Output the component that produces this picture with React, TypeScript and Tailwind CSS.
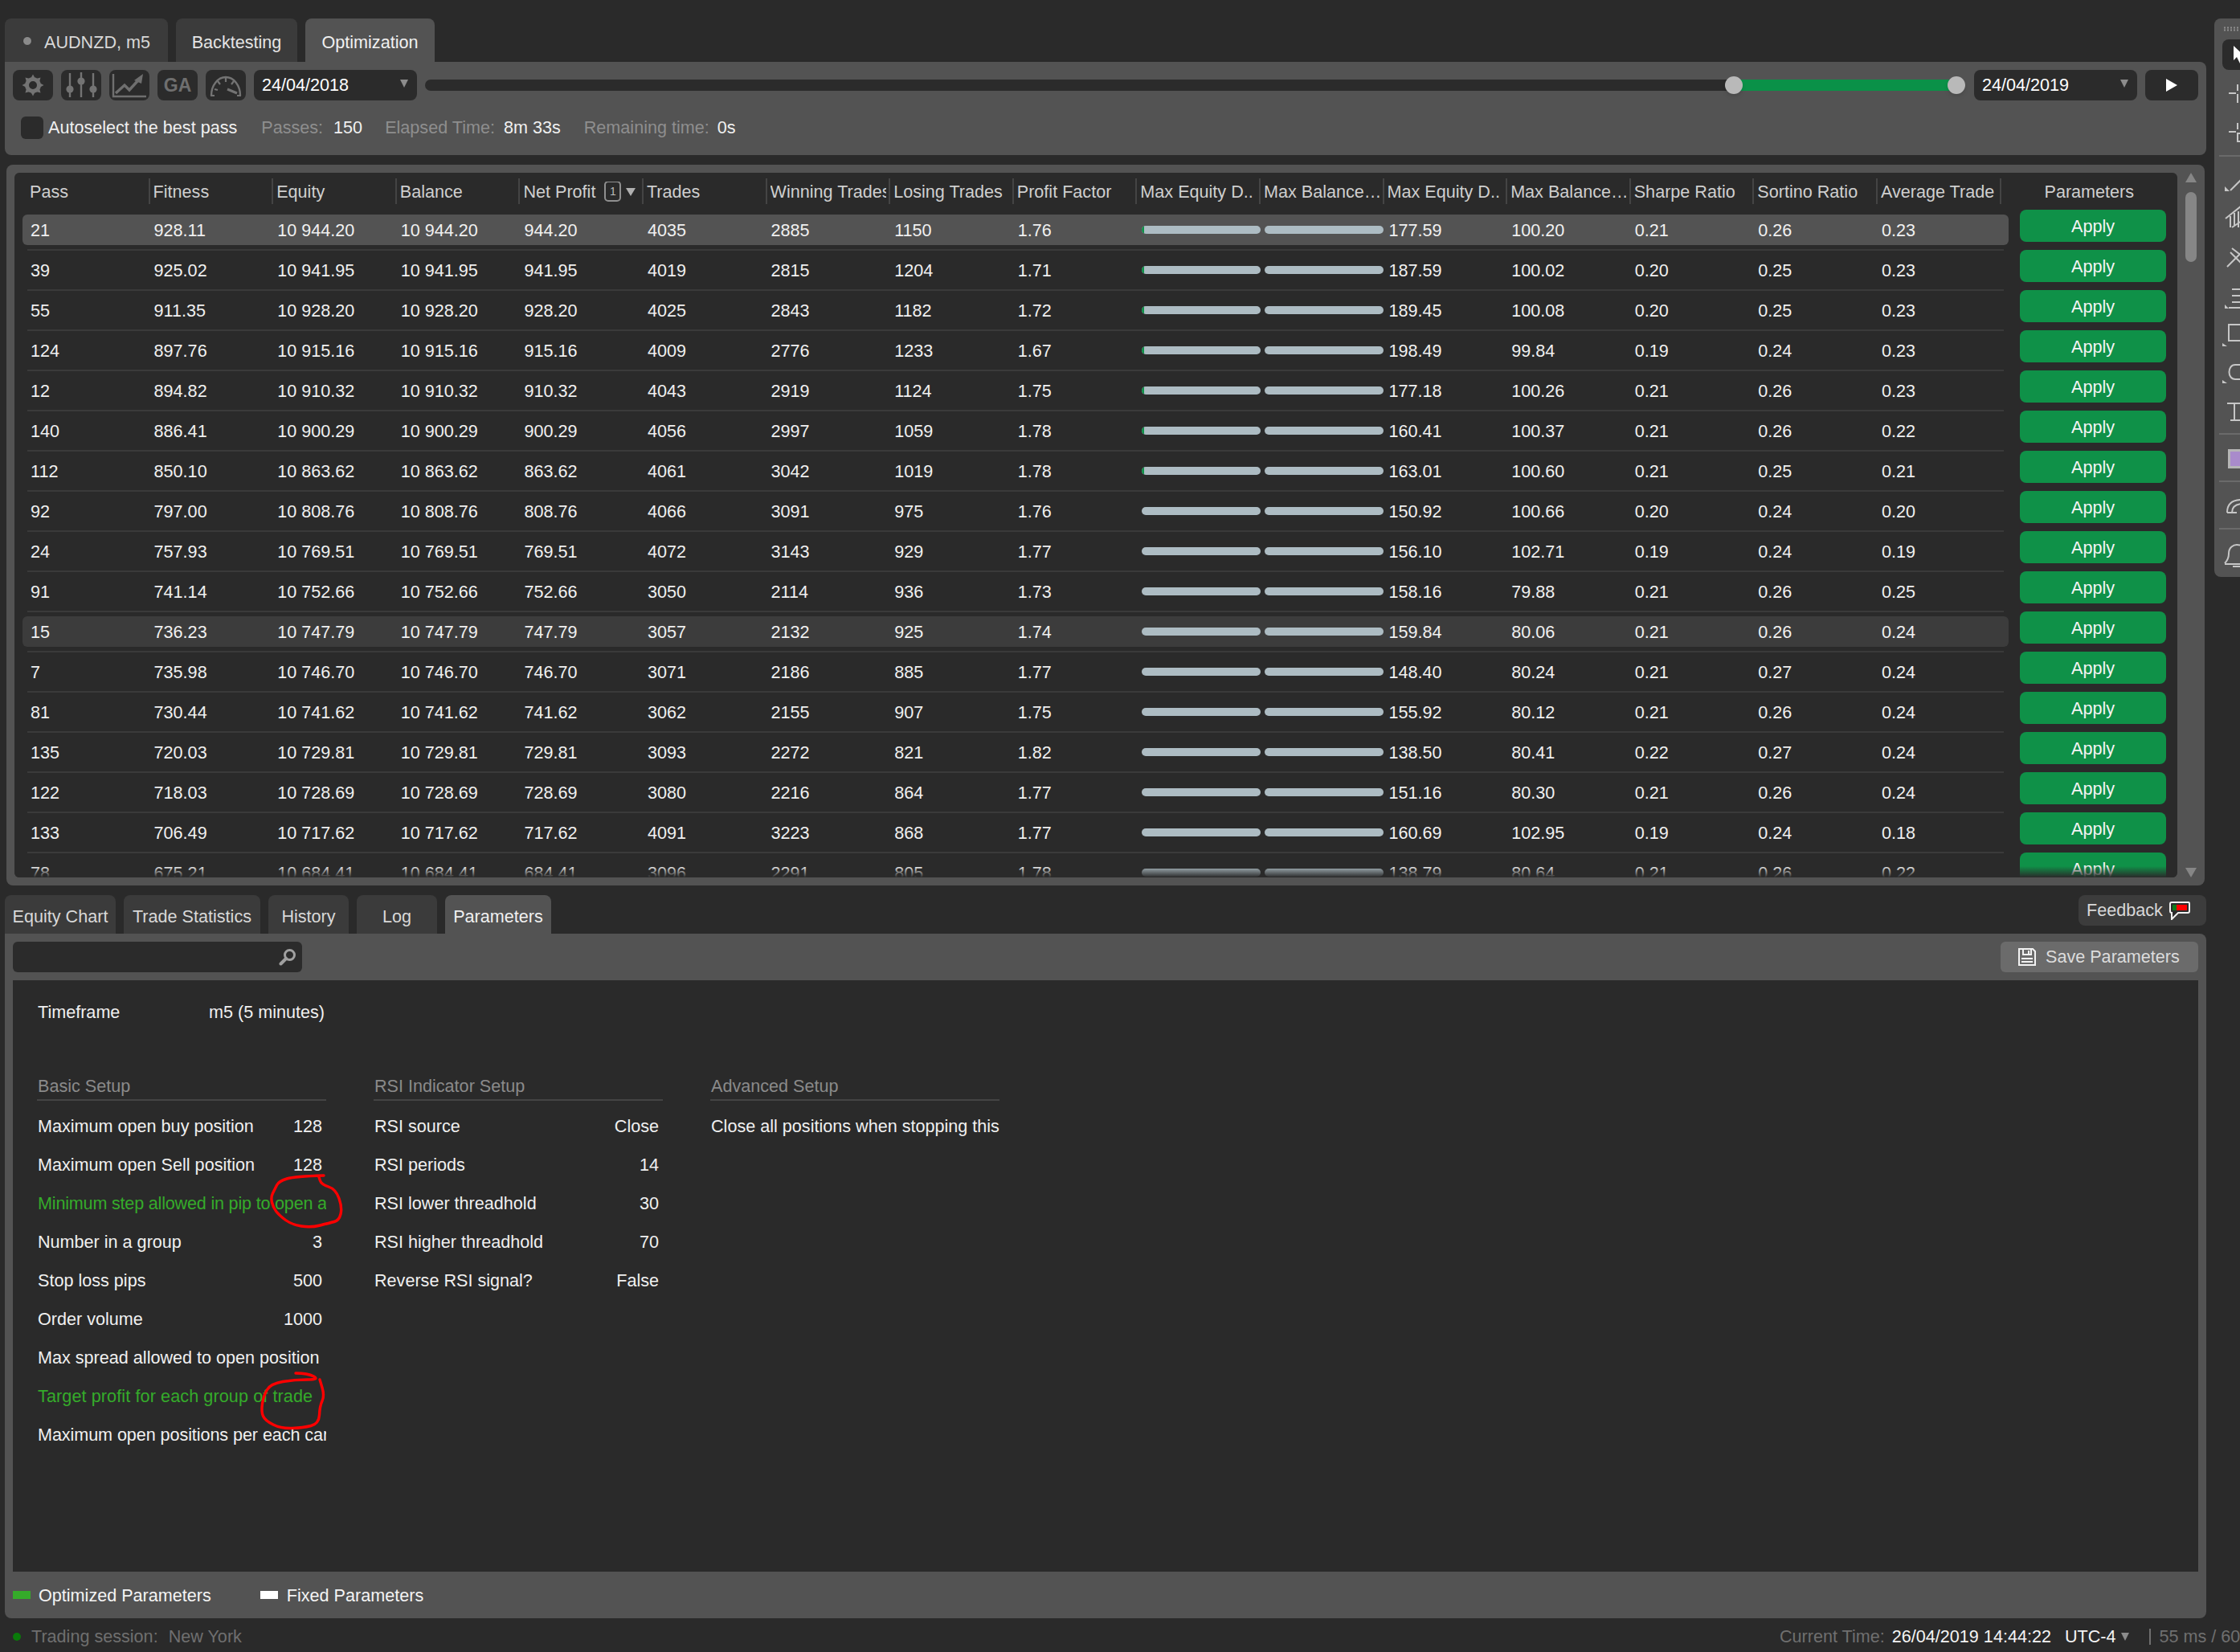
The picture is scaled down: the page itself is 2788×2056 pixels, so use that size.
import React from "react";

const ROWS = [
    ["21", "928.11", "10 944.20", "944.20", "4035", "2885", "1150", "1.76", "177.59", "100.20", "0.21", "0.26", "0.23"],
    ["39", "925.02", "10 941.95", "941.95", "4019", "2815", "1204", "1.71", "187.59", "100.02", "0.20", "0.25", "0.23"],
    ["55", "911.35", "10 928.20", "928.20", "4025", "2843", "1182", "1.72", "189.45", "100.08", "0.20", "0.25", "0.23"],
    ["124", "897.76", "10 915.16", "915.16", "4009", "2776", "1233", "1.67", "198.49", "99.84", "0.19", "0.24", "0.23"],
    ["12", "894.82", "10 910.32", "910.32", "4043", "2919", "1124", "1.75", "177.18", "100.26", "0.21", "0.26", "0.23"],
    ["140", "886.41", "10 900.29", "900.29", "4056", "2997", "1059", "1.78", "160.41", "100.37", "0.21", "0.26", "0.22"],
    ["112", "850.10", "10 863.62", "863.62", "4061", "3042", "1019", "1.78", "163.01", "100.60", "0.21", "0.25", "0.21"],
    ["92", "797.00", "10 808.76", "808.76", "4066", "3091", "975", "1.76", "150.92", "100.66", "0.20", "0.24", "0.20"],
    ["24", "757.93", "10 769.51", "769.51", "4072", "3143", "929", "1.77", "156.10", "102.71", "0.19", "0.24", "0.19"],
    ["91", "741.14", "10 752.66", "752.66", "3050", "2114", "936", "1.73", "158.16", "79.88", "0.21", "0.26", "0.25"],
    ["15", "736.23", "10 747.79", "747.79", "3057", "2132", "925", "1.74", "159.84", "80.06", "0.21", "0.26", "0.24"],
    ["7", "735.98", "10 746.70", "746.70", "3071", "2186", "885", "1.77", "148.40", "80.24", "0.21", "0.27", "0.24"],
    ["81", "730.44", "10 741.62", "741.62", "3062", "2155", "907", "1.75", "155.92", "80.12", "0.21", "0.26", "0.24"],
    ["135", "720.03", "10 729.81", "729.81", "3093", "2272", "821", "1.82", "138.50", "80.41", "0.22", "0.27", "0.24"],
    ["122", "718.03", "10 728.69", "728.69", "3080", "2216", "864", "1.77", "151.16", "80.30", "0.21", "0.26", "0.24"],
    ["133", "706.49", "10 717.62", "717.62", "4091", "3223", "868", "1.77", "160.69", "102.95", "0.19", "0.24", "0.18"],
    ["78", "675.21", "10 684.41", "684.41", "3096", "2291", "805", "1.78", "138.79", "80.64", "0.21", "0.26", "0.22"],
];

const HEADERS = [
    "Pass", "Fitness", "Equity", "Balance", "Net Profit", "Trades", "Winning Trades", "Losing Trades", "Profit Factor",
    "Max Equity D..", "Max Balance\u2026", "Max Equity D..", "Max Balance\u2026", "Sharpe Ratio", "Sortino Ratio", "Average Trade",
];

const BASIC = [
    ["Maximum open buy position", "128"],
    ["Maximum open Sell position", "128"],
    ["Minimum step allowed in pip to open a", "", "text-[#35ab2a] tracking-[-0.2px]"],
    ["Number in a group", "3"],
    ["Stop loss pips", "500"],
    ["Order volume", "1000"],
    ["Max spread allowed to open position", ""],
    ["Target profit for each group of trade", "", "text-[#35ab2a] tracking-[0.1px]"],
    ["Maximum open positions per each candle", "", "text-[#f0f0f0] tracking-[-0.08px]"],
];

const RSI = [
    ["RSI source", "Close"],
    ["RSI periods", "14"],
    ["RSI lower threadhold", "30"],
    ["RSI higher threadhold", "70"],
    ["Reverse RSI signal?", "False"],
];

const ADVANCED = [["Close all positions when stopping this cBot", ""]];

// hand drawn red marks, page coordinates
const MARK_ONE = [[403, 1463], [367, 1464], [347, 1470], [342, 1480], [337, 1490], [340, 1503], [348, 1513], [363, 1524], [387, 1528], [410, 1522], [422, 1519], [426, 1503], [418, 1480], [400, 1474], [397, 1465]];
const MARK_TWO = [[368, 1709], [383, 1709], [398, 1717], [367, 1717], [337, 1722], [328, 1737], [325, 1757], [330, 1768], [350, 1778], [377, 1777], [397, 1772], [398, 1750], [404, 1737], [398, 1717]];

function smooth(points: number[][]) {
    let d = `M${points[0][0]} ${points[0][1]}`;
    for (let i = 1; i < points.length - 1; i++) {
        const mx = (points[i][0] + points[i + 1][0]) / 2;
        const my = (points[i][1] + points[i + 1][1]) / 2;
        d += ` Q${points[i][0]} ${points[i][1]} ${mx} ${my}`;
    }
    const last = points[points.length - 1];
    return d + ` L${last[0]} ${last[1]}`;
}

function TriangleDown({ className }: { className: string }) {
    return (
        <svg viewBox="0 0 10 10" className={className} preserveAspectRatio="none">
            <path d="M0 0H10L5 10Z" fill="currentColor" />
        </svg>
    );
}

function GearIcon() {
    return (
        <svg viewBox="0 0 30 30" className="w-[30px] h-[30px] text-[#737373]">
            <circle cx="15" cy="15" r="7.5" fill="none" stroke="currentColor" strokeWidth="5" />
            {[0, 45, 90, 135, 180, 225, 270, 315].map(a => (
                <path key={a} d="M12.5 6L15 1.5L17.5 6Z" fill="currentColor" transform={`rotate(${a} 15 15)`} />
            ))}
        </svg>
    );
}

function SlidersIcon() {
    return (
        <svg viewBox="0 0 44 34" className="w-[44px] h-[34px] text-[#737373]">
            <path d="M8 2V32M22 1V32M37 2V32" stroke="currentColor" strokeWidth="2.4" fill="none" />
            <circle cx="8" cy="22" r="4.6" fill="currentColor" />
            <circle cx="22" cy="12" r="4.6" fill="currentColor" />
            <circle cx="37" cy="22" r="4.6" fill="currentColor" />
        </svg>
    );
}

function ChartIcon() {
    return (
        <svg viewBox="0 0 44 34" className="w-[44px] h-[34px] text-[#6f6f6f]">
            <path d="M2 3V31H43" stroke="currentColor" strokeWidth="2.4" fill="none" />
            <path d="M5 27L16 17L22 23L33 11" stroke="currentColor" strokeWidth="3.4" fill="none" />
            <path d="M28 11L39 3L37 15Z" fill="currentColor" />
        </svg>
    );
}

function GaugeIcon() {
    return (
        <svg viewBox="0 0 42 32" className="w-[42px] h-[32px] text-[#737373]">
            <path d="M3 29A18 23 0 1 1 39 29" stroke="currentColor" strokeWidth="2.4" fill="none" />
            <path d="M21 7V12M11 11L14 15M31 11L28 15M7 21L11 22M2 29H7M35 29H40" stroke="currentColor" strokeWidth="2.2" fill="none" />
            <path d="M23 21L35 26" stroke="currentColor" strokeWidth="3" fill="none" />
        </svg>
    );
}

function DateSelect({ value, className }: { value: string; className: string }) {
    return (
        <div className={`flex items-center justify-between h-[38px] rounded-lg bg-[#2b2b2b] pl-[10px] text-white ${className}`}>
            <span>{value}</span>
            <TriangleDown className="w-[10px] h-[10px] text-[#8c8c8c] mr-[11px] mb-[4px]" />
        </div>
    );
}

function BarCell({ first, green }: { first: boolean; green: boolean }) {
    return (
        <div className={`w-[153.6px] flex-none ${first ? "pl-[8px]" : "pl-[7px]"}`}>
            <div className="w-[148px] h-[10px] rounded-full bg-[#adbcc3] overflow-hidden">
                {green && <div className="w-[3px] h-[10px] bg-[#0f9148]" />}
            </div>
        </div>
    );
}

function ResultRow({ row, index }: { row: string[]; index: number }) {
    const bg = index === 0 ? "bg-[#535353]" : row[0] === "15" ? "bg-[#3c3c3c]" : "";
    const cells = [row[0], row[1], row[2], row[2], row[3], row[4], row[5], row[6], row[7]];
    const after = [row[8], row[9], row[10], row[11], row[12]];

    return (
        <div className="flex items-start h-[50px] flex-none">
            <div className="w-[2472px] ml-[10px] flex-none">
                <div className={`flex items-center h-[38px] pl-[3px] rounded-md ${bg}`}>
                    {cells.map((c, i) => (
                        <div key={i} className="w-[153.6px] flex-none pl-[7px] pt-[2px] text-[#f0f0f0]">{c}</div>
                    ))}
                    <BarCell first green={index < 7} />
                    <BarCell first={false} green={false} />
                    {after.map((c, i) => (
                        <div key={i} className={`w-[153.6px] flex-none pt-[2px] text-[#f0f0f0] ${i === 0 ? "pl-[8px]" : "pl-[7px]"}`}>{c}</div>
                    ))}
                </div>
                <div className="h-[2px] mt-[5px] ml-[6px] w-[2460px] bg-[#3a3a3a]" />
            </div>
            <button className="ml-[14px] -mt-[6px] pt-[1px] w-[182px] h-[40px] flex-none rounded-lg bg-[#0f9148] text-[#f4f4f4] flex items-center justify-center">
                Apply
            </button>
        </div>
    );
}

function ResultsTable() {
    return (
        <div className="flex h-[897px] ml-[2px] w-[2736px] p-[10px] pr-0 rounded-lg bg-[#535353] flex-none">
            <div className="relative w-[2692px] h-[877px] rounded-md bg-[#2a2a2a] overflow-hidden flex-none flex flex-col">
                <div className="flex items-start h-[52px] pt-[7px] pl-[13px] flex-none text-[#cfcfcf]">
                    {HEADERS.map((h, i) => (
                        <div key={i} className={`w-[153.6px] h-[32px] flex-none border-l-2 pl-[4px] pt-[2px] flex items-center ${i === 0 ? "border-transparent" : "border-[#444444]"}`}>
                            <div className="w-[144px] overflow-hidden whitespace-nowrap flex items-center">
                                <span>{h}</span>
                                {h === "Net Profit" && (
                                    <>
                                        <span className="ml-[11px] -mt-[2px] w-[21px] h-[26px] rounded-[5px] border-2 border-[#8f8f8f] flex items-center justify-center text-[14px] text-[#bdbdbd]">1</span>
                                        <TriangleDown className="ml-[6px] w-[12px] h-[10px] text-[#b0b0b0]" />
                                    </>
                                )}
                            </div>
                        </div>
                    ))}
                    <div className="w-[2px] h-[32px] flex-none bg-[#444444]" />
                    <div className="ml-[54px] h-[32px] pt-[2px] flex items-center">Parameters</div>
                </div>
                <div className="flex flex-col">
                    {ROWS.map((r, i) => (
                        <ResultRow key={i} row={r} index={i} />
                    ))}
                </div>
                {/* bottom fade over the cut row */}
                <div className="absolute left-0 right-0 bottom-0 h-[14px] bg-gradient-to-b from-transparent to-[#2a2a2a]" />
            </div>
            <div className="w-[34px] h-[877px] flex-none flex flex-col items-center">
                <svg viewBox="0 0 14 12" className="w-[14px] h-[12px] text-[#868686]"><path d="M7 0L14 12H0Z" fill="currentColor" /></svg>
                <div className="w-[14px] h-[87px] mt-[12px] rounded-full bg-[#868686]" />
                <TriangleDown className="mt-auto w-[14px] h-[12px] text-[#868686]" />
            </div>
        </div>
    );
}

function ParamSection({ title, rows, width }: { title: string; rows: string[][]; width: string }) {
    return (
        <div className={`flex-none ${width}`}>
            <div className="h-[33px] leading-[28px] pt-[1px] pl-[1px] border-b-2 border-[#444444] text-[#8a8a8a]">{title}</div>
            <div className="mt-[8px] flex flex-col">
                {rows.map((r, i) => (
                    <div key={i} className="h-[48px] flex items-center overflow-hidden whitespace-nowrap pl-[1px] pr-[5px]">
                        <span className={r[2] || "text-[#f0f0f0]"}>{r[0]}</span>
                        {r[1] && <span className="ml-auto text-[#f0f0f0]">{r[1]}</span>}
                    </div>
                ))}
            </div>
        </div>
    );
}

function ParametersPanel() {
    return (
        <div className="flex flex-col h-[852px] rounded-b-lg rounded-tr-lg bg-[#535353] px-[10px] pt-[10px] flex-none">
            <div className="flex items-center justify-between h-[38px] flex-none">
                <div className="w-[360px] h-[38px] rounded-md bg-[#2b2b2b] flex items-center justify-end pr-[7px]">
                    <svg viewBox="0 0 22 22" className="w-[22px] h-[22px] text-[#a0a0a0]">
                        <circle cx="13.5" cy="8.5" r="6" fill="none" stroke="currentColor" strokeWidth="3" />
                        <path d="M9 13L2.5 19.5" stroke="currentColor" strokeWidth="4" strokeLinecap="round" />
                    </svg>
                </div>
                <button className="w-[246px] h-[38px] rounded-md bg-[#6b6b6b] text-[#dcdcdc] flex items-center pl-[22px]">
                    <svg viewBox="0 0 22 22" className="w-[22px] h-[22px]">
                        <path d="M1 1H18L21 4V21H1Z" fill="none" stroke="#f2f2f2" strokeWidth="2" />
                        <path d="M6 2V8H16V2M13 3V7M4 13H18M4 17H18" fill="none" stroke="#f2f2f2" strokeWidth="2" />
                    </svg>
                    <span className="ml-[12px]">Save Parameters</span>
                </button>
            </div>
            <div className="mt-[10px] h-[736px] bg-[#2a2a2a] pl-[30px] pt-[25px] flex-none">
                <div className="flex h-[28px] leading-[28px] pt-[1px] text-[#f0f0f0] pl-[1px]">
                    <span className="w-[213px]">Timeframe</span>
                    <span>m5 (5 minutes)</span>
                </div>
                <div className="flex gap-[59px] mt-[64px]">
                    <ParamSection title="Basic Setup" rows={BASIC} width="w-[360px]" />
                    <ParamSection title="RSI Indicator Setup" rows={RSI} width="w-[360px]" />
                    <ParamSection title="Advanced Setup" rows={ADVANCED} width="w-[360px]" />
                </div>
            </div>
            <div className="flex items-center h-[58px] flex-none text-[#f4f4f4]">
                <div className="w-[22px] h-[10px] bg-[#35ab2a]" />
                <span className="ml-[10px] pt-[1px]">Optimized Parameters</span>
                <div className="ml-[61px] w-[22px] h-[10px] bg-white" />
                <span className="ml-[11px] pt-[1px]">Fixed Parameters</span>
            </div>
        </div>
    );
}

function ToolIcon({ d, height = "h-[46px]", fill }: { d: string; height?: string; fill?: string }) {
    return (
        <svg viewBox="0 0 60 46" className={`w-[60px] flex-none text-[#c6c6c6] ${height}`}>
            <path d={d} fill="none" stroke="currentColor" strokeWidth="2" />
            {fill && <path d={fill} fill="currentColor" />}
        </svg>
    );
}

function DrawingToolbar() {
    const sep = "h-[2px] w-[70px] -ml-[4px] bg-[#6a6a6a] flex-none";
    return (
        <div className="ml-[10px] w-[80px] h-[695px] flex-none rounded-l-lg bg-[#535353] pl-[10px] pt-[10px] flex flex-col">
            <svg viewBox="0 0 26 6" className="w-[26px] h-[6px] ml-[2px] flex-none text-[#8f8f8f]">
                <path d="M0 1.5H26M0 4.5H26" stroke="currentColor" strokeWidth="2" strokeDasharray="2 2" />
            </svg>
            <div className="mt-[10px] w-[60px] h-[38px] rounded-lg bg-[#2b2b2b] flex-none">
                <svg viewBox="0 0 20 24" className="ml-[13px] mt-[8px] w-[20px] h-[24px] text-white">
                    <path d="M1 0V18L5 14L9 22L12 21L9 13H15Z" fill="currentColor" />
                </svg>
            </div>
            {/* crosshairs */}
            <ToolIcon height="h-[48px] mt-[4px]" d="M8 24H17M19 13V21M19 25V36" />
            <ToolIcon height="h-[48px]" d="M8 24H17M19 13V21M19 26H26V36H19Z" />
            <div className={`${sep} mt-[6px]`} />
            {/* line, fibonacci, pitchfork, grid, rect, ellipse, text */}
            <div className="mt-[12px] flex flex-col flex-none">
                <ToolIcon d="M10 30L30 10" fill="M3 25L9 31H3Z" />
                <ToolIcon d="M4 19L24 3M10 16V30M15 12V28M20 10V30M24 12V24M12 30L24 22" />
                <ToolIcon d="M6 33L30 9M10 15L26 31M12 10L30 24" />
                <ToolIcon d="M12 15H40M12 23H40M12 31H40M8 38H40" fill="M3 34L8 39H3Z" />
                <ToolIcon d="M8 13H34V33H8Z" fill="M0 36L6 40H0Z" />
                <ToolIcon d="M16 17H34M16 35H34M16 17C6 17 6 35 16 35" fill="M0 36L6 40H0Z" />
                <ToolIcon d="M6 19H24M15 19V40M10 40H22" />
            </div>
            <div className={`${sep} mt-[10px]`} />
            <div className="mt-[18px] ml-[7px] w-[50px] h-[24px] flex-none border-[3px] border-[#b5b5b5] bg-[#a98bcb]" />
            <div className={`${sep} mt-[15px]`} />
            <ToolIcon height="h-[46px] mt-[10px]" d="M6 28C6 16 14 12 24 12H40M12 28C12 20 18 17 26 17H40M6 28H18" />
            <div className={`${sep} mt-[1px]`} />
            <ToolIcon height="h-[46px] mt-[10px]" d="M3 32C7 28 8 24 8 20C8 12 14 9 18 9C24 9 30 12 30 20M3 33H30M13 36H22" />
        </div>
    );
}

export default function App() {
    const tab = "flex items-center justify-center h-[54px] pt-[6px] rounded-t-lg flex-none";
    const lowerTab = "flex items-center justify-center h-[48px] pt-[5px] rounded-t-lg flex-none";

    return (
        <div className="relative w-[2788px] h-[2056px] overflow-hidden bg-[#2a2a2a] text-[21.6px] leading-[26px] font-['Liberation_Sans',Arial,sans-serif] flex flex-col">
            <div className="flex h-[2014px] flex-none pt-[23px]">
                <div className="w-[2740px] ml-[6px] flex-none flex flex-col">
                    {/* top tabs */}
                    <div className="flex gap-[10px] flex-none">
                        <div className={`${tab} w-[203px] bg-[#3b3b3b] text-[#d8d8d8]`}>
                            <div className="w-[12px] h-[12px] -mt-[4px] rounded-full bg-[#8a8a8a] border border-[#333333]" />
                            <span className="ml-[15px]">AUDNZD, m5</span>
                        </div>
                        <div className={`${tab} w-[151px] bg-[#3b3b3b] text-[#e4e4e4]`}>Backtesting</div>
                        <div className={`${tab} w-[161px] bg-[#535353] text-[#f0f0f0]`}>Optimization</div>
                    </div>

                    {/* run bar */}
                    <div className="h-[116px] rounded-b-lg rounded-tr-lg bg-[#535353] px-[10px] pt-[10px] flex-none">
                        <div className="flex items-center">
                            <div className="flex gap-[10px] flex-none">
                                <div className="w-[50px] h-[38px] rounded-lg bg-[#2b2b2b] flex items-center justify-center"><GearIcon /></div>
                                <div className="w-[50px] h-[38px] rounded-lg bg-[#2b2b2b] flex items-center justify-center"><SlidersIcon /></div>
                                <div className="w-[50px] h-[38px] rounded-lg bg-[#2b2b2b] flex items-center justify-center"><ChartIcon /></div>
                                <div className="w-[50px] h-[38px] rounded-lg bg-[#2b2b2b] flex items-center justify-center text-[#6f6f6f] font-bold text-[23px]">GA</div>
                                <div className="w-[50px] h-[38px] rounded-lg bg-[#2b2b2b] flex items-center justify-center"><GaugeIcon /></div>
                            </div>
                            <DateSelect value="24/04/2018" className="ml-[10px] w-[203px] flex-none" />
                            {/* date range slider */}
                            <div className="relative ml-[10px] w-[1917px] h-[14px] flex-none rounded-full bg-[#2b2b2b] flex">
                                <div className="w-[1629px] flex-none" />
                                <div className="w-[277px] h-[14px] flex-none bg-[#0a9148]" />
                                <div className="absolute left-[1618px] -top-[4px] w-[22px] h-[22px] rounded-full bg-[#b9b9b9] shadow-md" />
                                <div className="absolute left-[1895px] -top-[4px] w-[22px] h-[22px] rounded-full bg-[#b9b9b9] shadow-md" />
                            </div>
                            <DateSelect value="24/04/2019" className="ml-[11px] w-[203px] flex-none" />
                            <div className="ml-[10px] w-[66px] h-[38px] flex-none rounded-lg bg-[#2b2b2b] flex items-center justify-center">
                                <svg viewBox="0 0 14 16" className="w-[14px] h-[16px] text-white"><path d="M0 0L14 8L0 16Z" fill="currentColor" /></svg>
                            </div>
                        </div>
                        <div className="flex items-center mt-[20px] pl-[10px] whitespace-nowrap">
                            <div className="w-[28px] h-[28px] flex-none rounded-md bg-[#2b2b2b]" />
                            <span className="ml-[6px] text-[#f0f0f0]">Autoselect the best pass</span>
                            <span className="ml-[30px] text-[#8e8e8e]">Passes:</span>
                            <span className="ml-[13px] text-[#f0f0f0]">150</span>
                            <span className="ml-[28px] text-[#8e8e8e]">Elapsed Time:</span>
                            <span className="ml-[11px] text-[#f0f0f0]">8m 33s</span>
                            <span className="ml-[29px] text-[#8e8e8e]">Remaining time:</span>
                            <span className="ml-[10px] text-[#f0f0f0]">0s</span>
                        </div>
                    </div>

                    <div className="h-[12px] flex-none" />
                    <ResultsTable />
                    <div className="h-[12px] flex-none" />

                    {/* lower tabs */}
                    <div className="flex flex-none items-start">
                        <div className="flex gap-[10px]">
                            <div className={`${lowerTab} w-[138px] bg-[#3b3b3b] text-[#d8d8d8]`}>Equity Chart</div>
                            <div className={`${lowerTab} w-[170px] bg-[#3b3b3b] text-[#d8d8d8]`}>Trade Statistics</div>
                            <div className={`${lowerTab} w-[100px] bg-[#3b3b3b] text-[#d8d8d8]`}>History</div>
                            <div className={`${lowerTab} w-[100px] bg-[#3b3b3b] text-[#d8d8d8]`}>Log</div>
                            <div className={`${lowerTab} w-[132px] bg-[#535353] text-[#f0f0f0]`}>Parameters</div>
                        </div>
                        <div className="ml-auto w-[159px] h-[38px] rounded-lg bg-[#3c3c3c] text-[#d8d8d8] flex items-center pl-[10px]">
                            <span>Feedback</span>
                            <svg viewBox="0 0 26 23" className="ml-[8px] w-[26px] h-[23px]">
                                <path d="M3 1H24Q25 1 25 3V12Q25 14 23 14H11L3 22V14H3Q1 14 1 12V3Q1 1 3 1Z" fill="#2b2b2b" stroke="#f2f2f2" strokeWidth="2" />
                                <rect x="4" y="4" width="5" height="7" fill="#0f7a1a" />
                                <rect x="9" y="4" width="13" height="7" fill="#ff0000" />
                            </svg>
                        </div>
                    </div>

                    <ParametersPanel />
                </div>
                <DrawingToolbar />
            </div>

            {/* status bar */}
            <div className="flex items-center h-[42px] pt-[3px] flex-none whitespace-nowrap text-[#6f6f6f]">
                <div className="w-[2215px] flex-none flex items-center pl-[16px]">
                    <div className="w-[10px] h-[10px] rounded-full bg-[#0a7a0a]" />
                    <span className="ml-[13px]">Trading session:</span>
                    <span className="ml-[13px]">New York</span>
                </div>
                <span className="flex-none">Current Time:</span>
                <span className="ml-[9px] text-[#f4f4f4] flex-none">26/04/2019 14:44:22</span>
                <span className="ml-[17px] text-[#f4f4f4] flex-none">UTC-4</span>
                <TriangleDown className="ml-[6px] w-[10px] h-[10px] text-[#8c8c8c] flex-none" />
                <div className="ml-[25px] w-[2px] h-[20px] bg-[#6f6f6f] flex-none" />
                <span className="ml-[11px] flex-none">55 ms / 60 ms</span>
            </div>

            {/* red marks drawn on the screenshot */}
            <svg viewBox="330 1455 100 80" className="absolute left-[330px] top-[1455px] w-[100px] h-[80px]">
                <path d={smooth(MARK_ONE)} fill="none" stroke="#ff0000" strokeWidth="3.4" strokeLinecap="round" />
            </svg>
            <svg viewBox="320 1704 90 80" className="absolute left-[320px] top-[1704px] w-[90px] h-[80px]">
                <path d={smooth(MARK_TWO)} fill="none" stroke="#ff0000" strokeWidth="3.4" strokeLinecap="round" />
            </svg>
        </div>
    );
}
